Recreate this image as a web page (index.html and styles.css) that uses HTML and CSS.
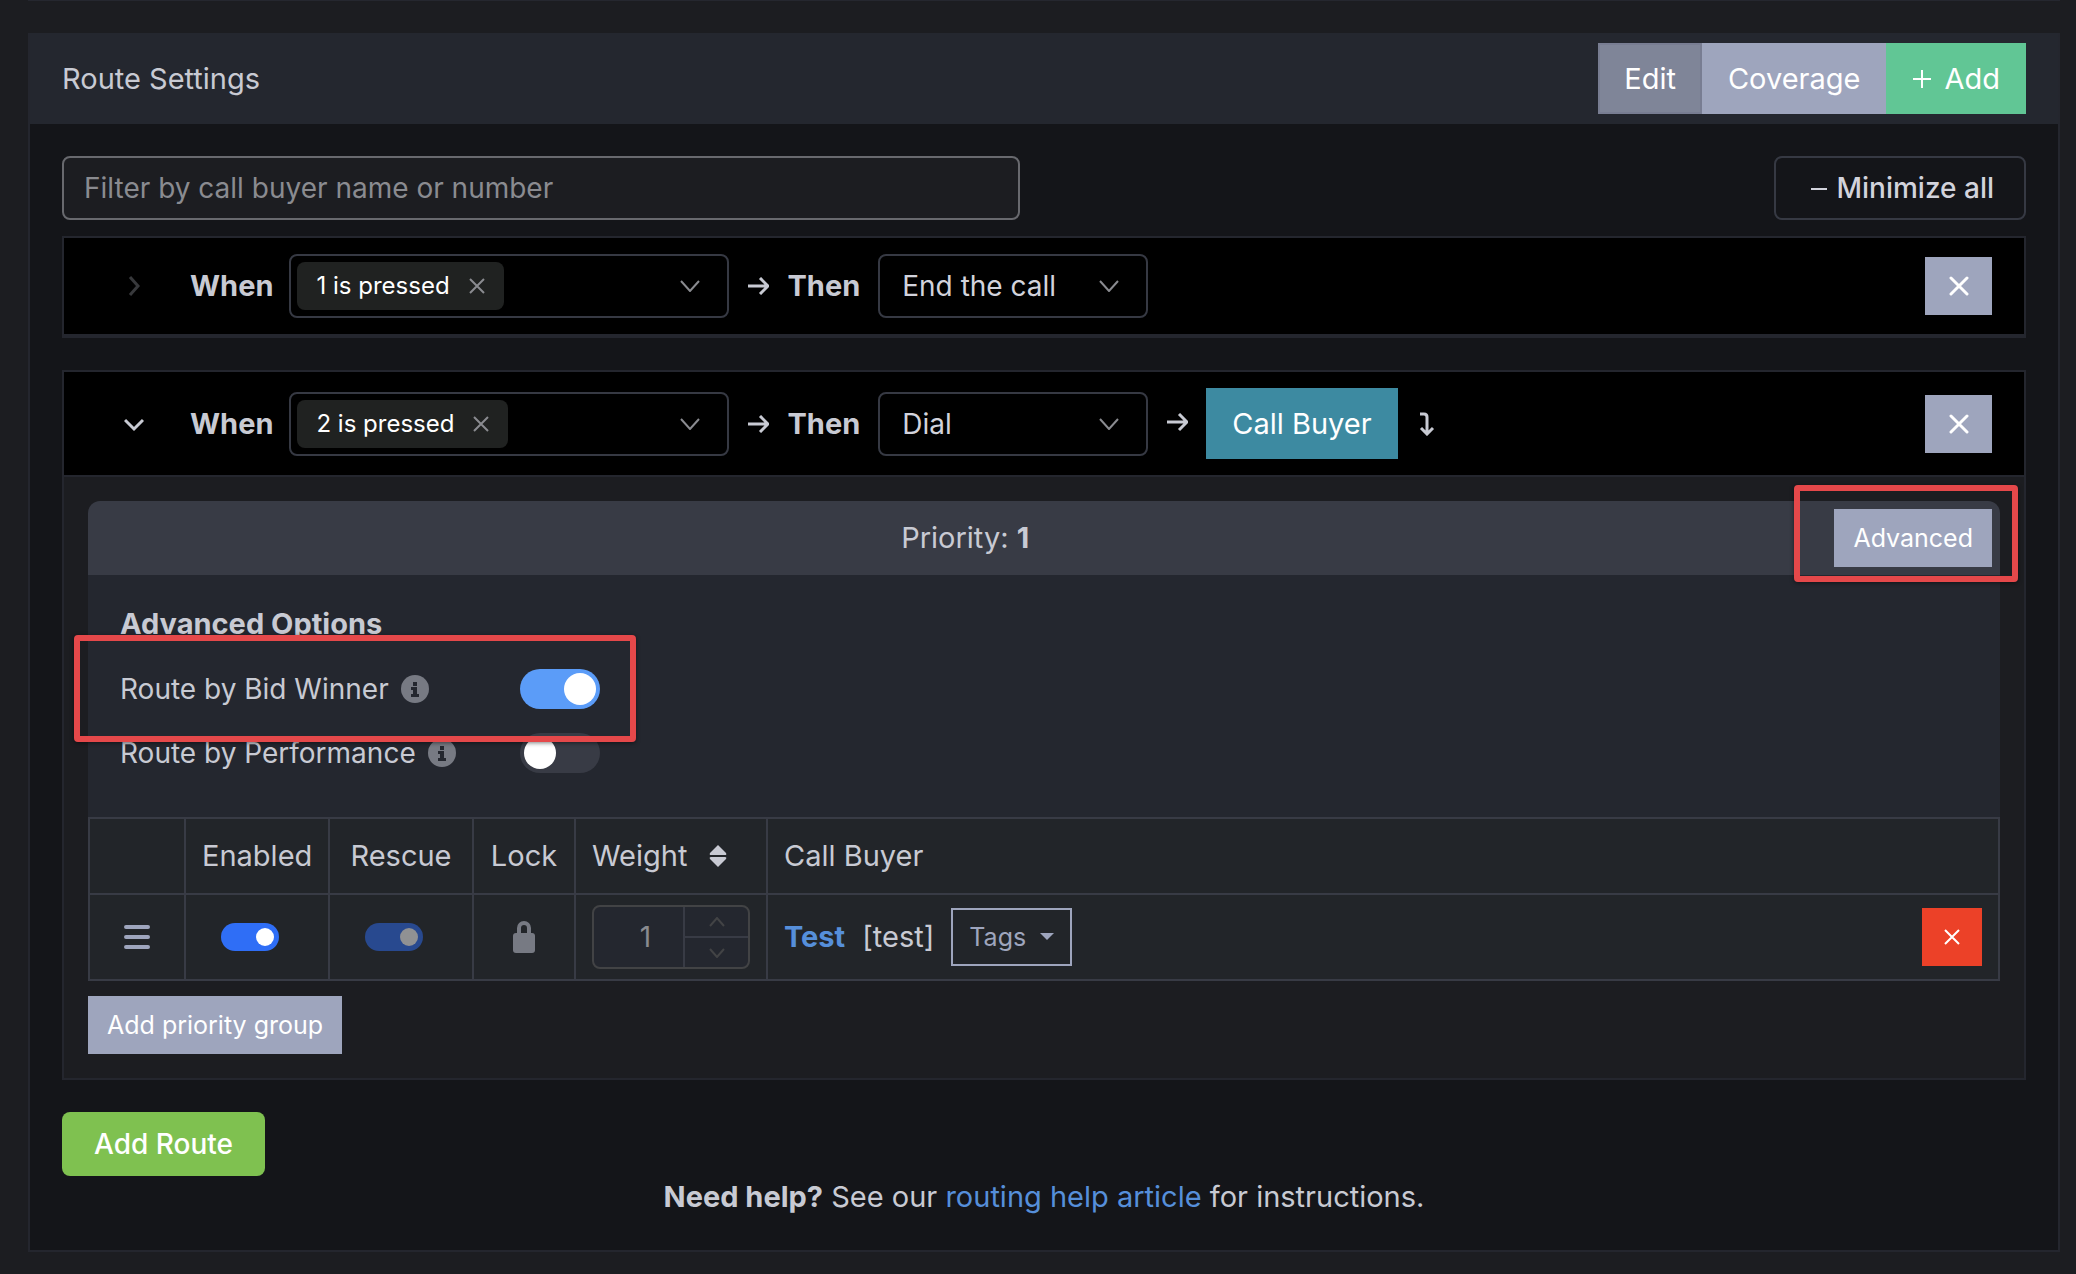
FILE: index.html
```html
<!DOCTYPE html>
<html lang="en">

<head>
    <meta charset="UTF-8">
    <meta name="viewport" content="width=device-width, initial-scale=1.0">
    <title>Route Settings</title>
    <link rel="stylesheet" href="styles.css">
</head>

<body>
    <main class="card">
        <header class="card-header">
            <h1 class="card-title">Route Settings</h1>
            <div class="btn-group">
                <button type="button" class="btn btn-edit">Edit</button>
                <button type="button" class="btn btn-secondary">Coverage</button>
                <button type="button" class="btn btn-add">
                    <svg width="20" height="20" viewBox="0 0 20 20"><path d="M10 1v18M1 10h18" /></svg>
                    Add
                </button>
            </div>
        </header>

        <div class="card-body">
            <div class="toolbar">
                <input type="text" class="filter" aria-label="Filter routes" placeholder="Filter by call buyer name or number">
                <button type="button" class="btn-minimize">
                    <svg width="18" height="18" viewBox="0 0 18 18"><path d="M1 10h16" /></svg>
                    Minimize all
                </button>
            </div>

            <section class="route route-closed">
                <div class="route-head">
                    <button type="button" class="caret caret-closed" aria-label="Expand route">
                        <svg width="20" height="20" viewBox="0 0 20 20"><path d="M6 1l8 9-8 9" /></svg>
                    </button>
                    <strong class="when">When</strong>
                    <div class="picker picker-multi">
                        <span class="chip">1 is pressed
                            <button type="button" class="chip-remove" aria-label="Remove 1 is pressed">
                                <svg width="16" height="16" viewBox="0 0 16 16"><path d="M1 1l14 14M15 1L1 15" /></svg>
                            </button>
                        </span>
                        <select aria-label="Key pressed">
                            <option></option>
                        </select>
                        <svg class="picker-arrow" width="22" height="12" viewBox="0 0 22 12"><path d="M2 1l9 10 9-10" /></svg>
                    </div>
                    <svg class="arrow" width="22" height="18" viewBox="0 0 22 18"><path d="M1 9h20M13 1l8 8-8 8" /></svg>
                    <strong>Then</strong>
                    <div class="picker">
                        <select aria-label="Action">
                            <option>End the call</option>
                            <option>Dial</option>
                        </select>
                        <svg class="picker-arrow" width="22" height="12" viewBox="0 0 22 12"><path d="M2 1l9 10 9-10" /></svg>
                    </div>
                    <button type="button" class="btn-sm btn-close" aria-label="Delete route">
                        <svg width="20" height="20" viewBox="0 0 20 20"><path d="M2 2l16 16M18 2L2 18" /></svg>
                    </button>
                </div>
            </section>

            <section class="route">
                <div class="route-head">
                    <button type="button" class="caret" aria-label="Collapse route">
                        <svg width="20" height="20" viewBox="0 0 20 20"><path d="M1 6l9 9 9-9" /></svg>
                    </button>
                    <strong class="when">When</strong>
                    <div class="picker picker-multi">
                        <span class="chip">2 is pressed
                            <button type="button" class="chip-remove" aria-label="Remove 2 is pressed">
                                <svg width="16" height="16" viewBox="0 0 16 16"><path d="M1 1l14 14M15 1L1 15" /></svg>
                            </button>
                        </span>
                        <select aria-label="Key pressed">
                            <option></option>
                        </select>
                        <svg class="picker-arrow" width="22" height="12" viewBox="0 0 22 12"><path d="M2 1l9 10 9-10" /></svg>
                    </div>
                    <svg class="arrow" width="22" height="18" viewBox="0 0 22 18"><path d="M1 9h20M13 1l8 8-8 8" /></svg>
                    <strong>Then</strong>
                    <div class="picker">
                        <select aria-label="Action">
                            <option>Dial</option>
                            <option>End the call</option>
                        </select>
                        <svg class="picker-arrow" width="22" height="12" viewBox="0 0 22 12"><path d="M2 1l9 10 9-10" /></svg>
                    </div>
                    <svg class="arrow" width="22" height="22" viewBox="0 0 22 22"><path d="M1 9h20M13 1l8 8-8 8" /></svg>
                    <button type="button" class="btn btn-buyer">Call Buyer</button>
                    <svg class="arrow" width="20" height="24" viewBox="0 0 20 24"><path d="M4 2h4q3 0 3 3v16M5 16l6 6 6-6" /></svg>
                    <button type="button" class="btn-sm btn-close" aria-label="Delete route">
                        <svg width="20" height="20" viewBox="0 0 20 20"><path d="M2 2l16 16M18 2L2 18" /></svg>
                    </button>
                </div>

                <div class="route-body">
                    <div class="priority-head">
                        <div class="priority-title">Priority: <strong>1</strong></div>
                        <div class="advanced-toggle">
                            <button type="button" class="btn-sm btn-advanced">Advanced</button>
                            <div class="highlight highlight-button"></div>
                        </div>
                    </div>

                    <div class="advanced">
                        <h2 class="advanced-title">Advanced Options</h2>
                        <div class="option">
                            <label for="bidWinner">Route by Bid Winner
                                <svg width="28" height="28" viewBox="0 0 28 28"><circle cx="14" cy="14" r="14" /><path d="M12 7h4v4h-4zM10 12h6v7h2v3h-8v-3h2v-4h-2z" /></svg>
                            </label>
                            <input type="checkbox" id="bidWinner" class="switch" checked>
                            <div class="highlight highlight-option"></div>
                        </div>
                        <div class="option">
                            <label for="performance">Route by Performance
                                <svg width="28" height="28" viewBox="0 0 28 28"><circle cx="14" cy="14" r="14" /><path d="M12 7h4v4h-4zM10 12h6v7h2v3h-8v-3h2v-4h-2z" /></svg>
                            </label>
                            <input type="checkbox" id="performance" class="switch">
                        </div>
                    </div>

                    <table class="buyers">
                        <colgroup>
                            <col class="col-drag">
                            <col class="col-toggle">
                            <col class="col-toggle">
                            <col class="col-lock">
                            <col class="col-weight">
                            <col>
                        </colgroup>
                        <thead>
                            <tr>
                                <th></th>
                                <th class="center">Enabled</th>
                                <th class="center">Rescue</th>
                                <th class="center">Lock</th>
                                <th>
                                    <span class="sortable">Weight
                                        <svg width="18" height="24" viewBox="0 0 18 24"><path d="M9 1l8 8q1 2-1 2H2q-2 0-1-2zM9 23l8-8q1-2-1-2H2q-2 0-1 2z" /></svg>
                                    </span>
                                </th>
                                <th>Call Buyer</th>
                            </tr>
                        </thead>
                        <tbody>
                            <tr>
                                <td>
                                    <svg class="drag" width="26" height="24" viewBox="0 0 26 24"><path d="M2 2h22M2 12h22M2 22h22" /></svg>
                                </td>
                                <td><input type="checkbox" class="switch switch-sm" aria-label="Enabled" checked></td>
                                <td><input type="checkbox" class="switch switch-sm" aria-label="Rescue" checked disabled></td>
                                <td>
                                    <svg class="lock" width="22" height="32" viewBox="0 0 22 32"><path class="shackle" d="M6 13V7a5 5 0 0 1 10 0v6" /><rect y="12" width="22" height="20" rx="3" /></svg>
                                </td>
                                <td>
                                    <div class="weight">
                                        <input type="number" aria-label="Weight" value="1" disabled>
                                        <div class="weight-steps">
                                            <button type="button" aria-label="Increase" disabled>
                                                <svg width="16" height="10" viewBox="0 0 16 10"><path d="M1 9l7-8 7 8" /></svg>
                                            </button>
                                            <button type="button" aria-label="Decrease" disabled>
                                                <svg width="16" height="10" viewBox="0 0 16 10"><path d="M1 1l7 8 7-8" /></svg>
                                            </button>
                                        </div>
                                    </div>
                                </td>
                                <td>
                                    <div class="buyer">
                                        <a href="#">Test</a>
                                        <span>[test]</span>
                                        <button type="button" class="btn-sm btn-tags">Tags
                                            <svg width="14" height="8" viewBox="0 0 14 8"><path d="M0 0h14L7 7z" /></svg>
                                        </button>
                                        <button type="button" class="btn-sm btn-delete" aria-label="Delete buyer">
                                            <svg width="16" height="16" viewBox="0 0 16 16"><path d="M1 1l14 14M15 1L1 15" /></svg>
                                        </button>
                                    </div>
                                </td>
                            </tr>
                        </tbody>
                    </table>

                    <button type="button" class="btn-sm">Add priority group</button>
                </div>
            </section>

            <button type="button" class="btn-route">Add Route</button>
            <p class="help"><strong>Need help?</strong> See our <a href="#">routing help article</a> for instructions.</p>
        </div>
    </main>
</body>

</html>
```
FILE: styles.css
```css
* {
    box-sizing: border-box;
}

body {
    margin: 0;
    padding: 32px 16px 20px 28px;
    background-color: #1c1d21;
    color: #c8cad3;
    font-family: Inter, sans-serif;
    font-size: 29px;
    line-height: 42px;
}

body::before {
    content: "";
    position: absolute;
    top: 0;
    left: 28px;
    right: 16px;
    height: 1px;
    background-color: #25272f;
}

button,
input,
select {
    font: inherit;
    color: inherit;
}

button {
    display: inline-flex;
    align-items: center;
    justify-content: center;
    padding: 0;
    border: none;
    cursor: pointer;
}

svg {
    flex: none;
    fill: none;
    stroke: currentColor;
    stroke-width: 2;
}

a {
    color: #568fda;
    text-decoration: none;
}

.card {
    border: 2px solid #24262e;
    border-top: none;
    margin-top: 1px;
    background-color: #141519;
}

.card-header {
    display: flex;
    align-items: center;
    justify-content: space-between;
    padding: 10px 32px;
    background-color: #24272f;
}

.card-title {
    margin: 0;
    font-size: 29px;
    font-weight: 400;
}

.card-body {
    padding: 32px;
}

.btn-group {
    display: flex;
}

.btn {
    height: 71px;
    padding: 0 26px;
    color: #fff;
    background-color: #9ea5bd;
}

.btn-edit {
    background-color: #7f8598;
    border: 2px solid #787d92;
    padding: 0 24px;
}

.btn-add {
    gap: 12px;
    background-color: #61c695;
}

.btn-buyer {
    background-color: #3d8aa1;
}

.btn-sm {
    height: 58px;
    padding: 0 19px;
    color: #fff;
    background-color: #9ea5bd;
    font-size: 25px;
}

.toolbar {
    display: flex;
    justify-content: space-between;
    margin-bottom: 16px;
}

.filter {
    width: calc(50% - 24px);
    height: 64px;
    padding: 0 20px;
    border: 2px solid #68696e;
    border-radius: 8px;
    background-color: #1c1d21;
    font-size: 28px;
}

.filter::placeholder {
    color: #8a8b90;
    opacity: 1;
}

.btn-minimize {
    gap: 8px;
    height: 64px;
    padding: 0 30px 0 34px;
    border: 2px solid #363943;
    border-radius: 8px;
    background-color: transparent;
    color: #d2d3dc;
    font-size: 28px;
    font-weight: 500;
}

.route {
    margin-bottom: 32px;
    border: 2px solid #24262e;
    background-color: #1c1d21;
}

.route-closed {
    border-bottom-width: 4px;
}

.route-head {
    display: flex;
    align-items: center;
    gap: 18px;
    padding: 16px 32px;
    background-color: #000;
}

.caret {
    width: 76px;
    height: 40px;
    background: none;
}

.caret svg {
    stroke-width: 3;
}

.caret-closed {
    color: #38393c;
}

.when {
    margin-right: -2px;
}

.picker {
    position: relative;
    display: flex;
    align-items: center;
    width: 270px;
    height: 64px;
    border: 2px solid #363943;
    border-radius: 8px;
    font-size: 28px;
}

.picker-multi {
    width: 440px;
    padding-left: 6px;
}

.picker select {
    flex: 1;
    min-width: 0;
    height: 100%;
    padding: 0 60px 0 22px;
    border: none;
    background: none;
    color: #d2d3dc;
    appearance: none;
}

.picker-arrow {
    position: absolute;
    right: 26px;
    color: #8a8b90;
    pointer-events: none;
}

.chip {
    display: flex;
    align-items: center;
    gap: 19px;
    height: 48px;
    padding: 0 19px;
    border-radius: 8px;
    background-color: #202221;
    color: #fff;
    font-size: 24px;
}

.chip-remove {
    background: none;
    color: #8a8b90;
}

.arrow {
    stroke-width: 3;
}

.btn-close {
    width: 67px;
    margin-left: auto;
}

.btn-close svg {
    stroke-width: 3;
    stroke-linecap: round;
}

.route-body {
    padding: 24px;
    border-top: 2px solid #24262e;
}

.priority-head {
    display: flex;
    align-items: center;
    padding: 8px;
    border-radius: 12px 12px 0 0;
    background-color: #383b45;
}

.priority-title {
    flex: 1;
    text-align: center;
}

.advanced-toggle {
    position: relative;
    display: flex;
}

/* red frames around the controls being pointed out */
.highlight {
    position: absolute;
    z-index: 1;
    border: 6px solid #e5484a;
    border-radius: 4px;
    box-shadow: 0 1px 4px rgba(0, 0, 0, 0.5);
    pointer-events: none;
}

.highlight-button {
    top: -24px;
    right: -26px;
    bottom: -15px;
    left: -40px;
}

.highlight-option {
    top: -34px;
    left: -46px;
    width: 562px;
    height: 107px;
}

.advanced {
    display: flex;
    flex-direction: column;
    gap: 24px;
    padding: 28px 32px 44px;
    background-color: #24272f;
}

.advanced-title {
    margin: 0;
    font-size: 29px;
    font-weight: 700;
    line-height: 42px;
}

.option {
    position: relative;
    display: flex;
    align-items: center;
    height: 40px;
    font-size: 28px;
}

.option label {
    display: flex;
    align-items: center;
    gap: 12px;
    width: 400px;
}

.option svg {
    stroke: none;
    fill: #777a83;
}

.option svg path {
    fill: #24272f;
}

.switch {
    appearance: none;
    display: flex;
    align-items: center;
    width: 80px;
    height: 40px;
    margin: 0;
    padding: 0 4px;
    border-radius: 20px;
    background-color: #383b45;
}

.switch::before {
    content: "";
    width: 32px;
    height: 32px;
    border-radius: 50%;
    background-color: #fff;
}

.switch:checked {
    justify-content: flex-end;
    background-color: #5b9cf8;
}

.switch-sm {
    width: 58px;
    height: 28px;
    padding: 0 5px;
    margin-left: 19px;
}

.switch-sm::before {
    width: 18px;
    height: 18px;
}

.switch-sm:checked {
    background-color: #2f6ef6;
}

.switch-sm:disabled {
    background-color: #28498f;
}

.switch-sm:disabled::before {
    background-color: #909193;
}

.buyers {
    width: 100%;
    margin-bottom: 15px;
    border-collapse: collapse;
    table-layout: fixed;
    background-color: #222529;
}

.buyers th,
.buyers td {
    padding: 16px;
    border: 2px solid #383b45;
    font-weight: 400;
    text-align: left;
}

.buyers td {
    padding: 10px 16px;
}

.buyers .center {
    text-align: center;
}

.col-drag {
    width: 96px;
}

.col-toggle {
    width: 144px;
}

.col-lock {
    width: 102px;
}

.col-weight {
    width: 192px;
}

.sortable {
    display: flex;
    align-items: center;
    gap: 22px;
}

.sortable svg {
    stroke: none;
    fill: currentColor;
}

.drag,
.lock {
    display: block;
    margin: 0 auto;
}

.drag {
    color: #9ea5bd;
    stroke-width: 4;
    stroke-linecap: round;
}

.lock {
    fill: #777a83;
    stroke: none;
}

.shackle {
    fill: none;
    stroke: #777a83;
    stroke-width: 4;
}

.weight {
    display: flex;
    height: 64px;
    border: 2px solid #424345;
    border-radius: 8px;
    background-color: #24272f;
    color: #424345;
    overflow: hidden;
}

.weight input {
    flex: 1;
    min-width: 0;
    padding: 0 0 0 14px;
    border: none;
    background: none;
    color: #8a8b90;
    font-size: 28px;
    text-align: center;
    appearance: textfield;
}

.weight input::-webkit-inner-spin-button {
    display: none;
}

.weight-steps {
    display: flex;
    flex-direction: column;
    width: 65px;
    border-left: 2px solid #383b45;
}

.weight-steps button {
    flex: 1;
    background: none;
    color: inherit;
}

.weight-steps button + button {
    border-top: 2px solid #383b45;
}

.buyer {
    display: flex;
    align-items: center;
    gap: 17px;
}

.buyer a {
    font-weight: 700;
}

.btn-tags {
    gap: 14px;
    padding: 0 16px;
    border: 2px solid #9ea5bd;
    background: none;
    color: #9ea5bd;
}

.btn-tags svg {
    fill: currentColor;
    stroke: none;
}

.btn-delete {
    width: 60px;
    margin-left: auto;
    background-color: #ec4128;
}

.btn-route {
    display: flex;
    height: 64px;
    padding: 0 32px;
    border-radius: 8px;
    background-color: #7fc150;
    color: #fff;
    font-size: 28px;
    font-weight: 500;
}

.help {
    margin: 0;
    text-align: center;
}
```
